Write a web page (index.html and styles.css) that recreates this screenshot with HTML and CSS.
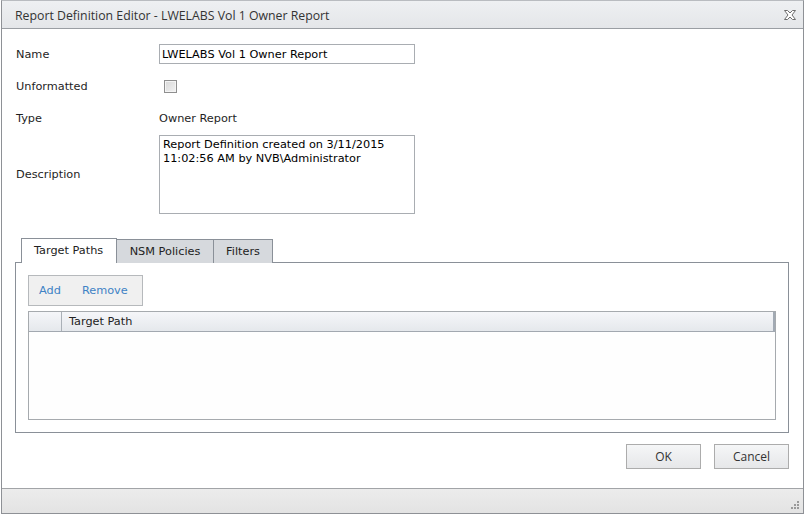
FILE: index.html
```html
<!DOCTYPE html>
<html>
<head>
<meta charset="utf-8">
<link rel="stylesheet" href="styles.css">
</head>
<body>
<div class="dialog">
  <div class="titlebar">
    <span class="title">Report Definition Editor - LWELABS Vol 1 Owner Report</span>
    <svg class="close" width="12" height="10" viewBox="0 0 12 10">
      <path d="M0.5 0.5 H3.5 L6 3 L8.5 0.5 H11.5 L8 5 L11.5 9.5 H8.5 L6 7 L3.5 9.5 H0.5 L4 5 Z" fill="#fff" stroke="#6d6d6d" stroke-width="1" stroke-linejoin="miter"/>
    </svg>
  </div>
  <div class="content">
    <div class="form">
      <div class="label">Name</div>
      <div class="field"><div class="input">LWELABS Vol 1 Owner Report</div></div>
      <div class="label">Unformatted</div>
      <div class="field"><div class="checkbox"></div></div>
      <div class="label">Type</div>
      <div class="field">Owner Report</div>
      <div class="label desc-label">Description</div>
      <div class="field desc-field"><div class="textarea">Report Definition created on 3/11/2015<br>11:02:56 AM by NVB\Administrator</div></div>
    </div>
    <div class="tabs">
      <div class="tab active">Target Paths</div>
      <div class="tab">NSM Policies</div>
      <div class="tab">Filters</div>
    </div>
    <div class="panel">
      <div class="toolbar">
        <span class="link">Add</span>
        <span class="link">Remove</span>
      </div>
      <div class="grid">
        <div class="grid-head">
          <div class="col-sel"></div>
          <div class="col-path">Target Path</div>
        </div>
        <div class="grid-body"></div>
      </div>
    </div>
    <div class="buttons">
      <div class="btn">OK</div>
      <div class="btn">Cancel</div>
    </div>
  </div>
  <div class="footer">
    <svg class="grip" width="12" height="12" viewBox="0 0 12 12">
      <g fill="#9a9a9a">
        <rect x="8" y="1" width="2" height="2"/>
        <rect x="5" y="4" width="2" height="2"/>
        <rect x="8" y="4" width="2" height="2"/>
        <rect x="2" y="7" width="2" height="2"/>
        <rect x="5" y="7" width="2" height="2"/>
        <rect x="8" y="7" width="2" height="2"/>
      </g>
    </svg>
  </div>
</div>
</body>
</html>
```

FILE: styles.css
```css
* { box-sizing: border-box; }
html, body { margin: 0; padding: 0; background: #fff; }
body {
  font-family: "DejaVu Sans", Verdana, sans-serif;
  font-size: 11.3px;
  color: #1e1e1e;
}
.dialog {
  margin: 0 1px;
  height: 514px;
  border: 1px solid #8e9196;
  border-top: 1px solid #b9bcc0;
  display: flex;
  flex-direction: column;
  background: #fff;
}
.titlebar {
  height: 28px;
  flex: none;
  background: linear-gradient(#eef0f2, #e4e6e9);
  border-bottom: 1px solid #9a9ea3;
  display: flex;
  align-items: center;
  justify-content: space-between;
  padding: 0 7px 0 13px;
}
.title {
  font-family: "Open Sans", "Noto Sans", sans-serif;
  font-size: 12.3px;
  color: #333;
  padding-top: 1px;
}
.close { display: block; margin-top: 1px; }
.content {
  flex: 1;
  padding: 9px 14px 0 13px;
  display: flex;
  flex-direction: column;
}
.form {
  display: grid;
  grid-template-columns: 144px 1fr;
  grid-template-rows: 32px 32px 32px 80px;
}
.label, .field {
  display: flex;
  align-items: center;
}
.label { padding-left: 1px; }
.desc-field { align-items: flex-start; padding-top: 1px; }
.input {
  width: 256px;
  height: 20px;
  border: 1px solid #a9adb2;
  padding: 1px 0 0 2px;
  display: flex;
  align-items: center;
  color: #000;
}
.checkbox {
  width: 13px;
  height: 13px;
  border: 1px solid #8f8f8f;
  background: linear-gradient(135deg, #d8d8d8, #f2f2f2);
  margin-left: 5px;
  box-shadow: inset 0 0 0 1px #f4f4f4;
}
.textarea {
  width: 256px;
  height: 79px;
  border: 1px solid #a9adb2;
  padding: 2px 3px;
  line-height: 13.5px;
  color: #000;
}
.tabs {
  display: flex;
  align-items: flex-end;
  padding-left: 6px;
  height: 25px;
  position: relative;
  z-index: 1;
  margin-top: 24px;
  margin-bottom: -1px;
}
.tab {
  height: 24px;
  border: 1px solid #8a9098;
  border-bottom: none;
  background: #d6d9dd;
  display: flex;
  align-items: center;
  padding: 0 12px;
  color: #222;
  margin-left: -1px;
}
.tab:first-child { margin-left: 0; }
.tab.active {
  height: 25px;
  background: #fff;
  padding: 0 11px 1px 12px;
  width: 96px;
}
.tab:nth-child(2) { width: 98px; justify-content: center; }
.tab:nth-child(3) { width: 60px; justify-content: center; }
.panel {
  border: 1px solid #8a9098;
  height: 171px;
  padding: 12px;
  display: flex;
  flex-direction: column;
}
.toolbar {
  width: 115px;
  height: 31px;
  border: 1px solid #b6b9bc;
  background: #f0f0f0;
  display: flex;
  align-items: center;
  gap: 21px;
  padding: 0 0 0 10px;
  flex: none;
}
.link { color: #3e82c5; }
.grid {
  margin-top: 5px;
  flex: 1;
  border: 1px solid #a6aaae;
  display: flex;
  flex-direction: column;
}
.grid-head {
  height: 20px;
  display: flex;
  background: linear-gradient(#f5f6f9, #e5e8ec);
  border-bottom: 1px solid #a2a8b0;
  border-right: 2px solid #a2aab4;
}
.col-sel {
  width: 33px;
  border-right: 1px solid #aab0b7;
}
.col-path {
  padding-left: 7px;
  display: flex;
  align-items: center;
  color: #222;
}
.grid-body { flex: 1; background: #fefefe; }
.buttons {
  display: flex;
  justify-content: flex-end;
  gap: 13px;
  margin-top: 11px;
}
.btn {
  width: 75px;
  height: 25px;
  border: 1px solid #acacac;
  background: linear-gradient(#f5f6f7, #e6e7e9);
  display: flex;
  align-items: center;
  justify-content: center;
  color: #333;
  font-size: 12px;
  font-family: "Open Sans", "Noto Sans", sans-serif;
}
.footer {
  height: 25px;
  flex: none;
  border-top: 1px solid #a2a4a7;
  background: linear-gradient(#ececec, #e3e3e3);
  display: flex;
  justify-content: flex-end;
  align-items: flex-end;
  padding: 0 2px 1px 0;
}
.grip { display: block; }
```
